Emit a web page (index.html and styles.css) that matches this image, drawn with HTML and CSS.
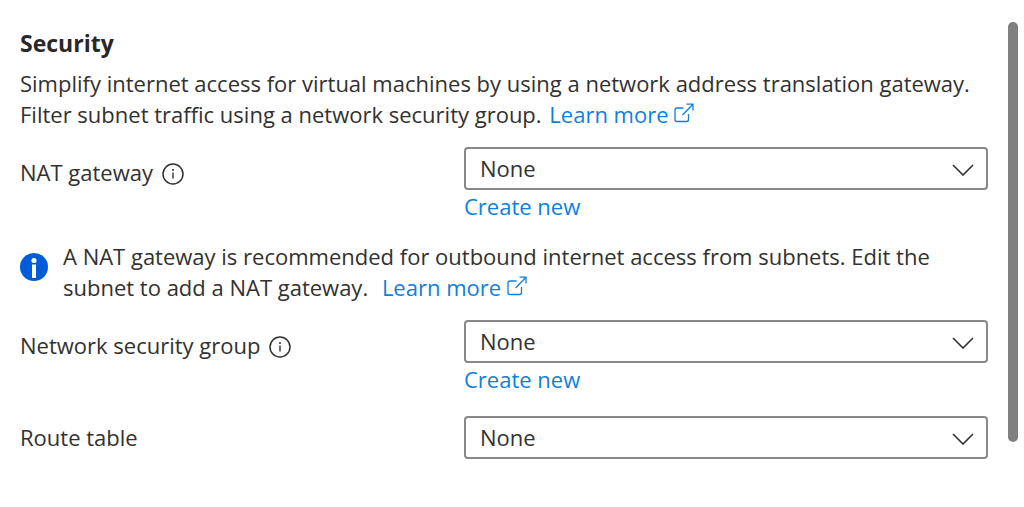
FILE: index.html
```html
<!DOCTYPE html>
<html lang="en">

<head>
  <meta charset="UTF-8" />
  <meta name="viewport" content="width=device-width, initial-scale=1.0" />
  <title>Subnet security</title>
  <link rel="stylesheet" href="styles.css">
</head>

<body>
  <!-- Shared icons -->
  <svg class="sprite" aria-hidden="true">
    <symbol id="icon-info" viewBox="0 0 22 22">
      <circle cx="11" cy="11" r="10" fill="none" stroke="currentColor" stroke-width="1.5" />
      <path d="M11 9.5v6" fill="none" stroke="currentColor" stroke-width="1.4" />
      <circle cx="11" cy="7" r="1" fill="currentColor" />
    </symbol>
    <symbol id="icon-external" viewBox="0 0 20 20">
      <path d="M9.5 5H3a2 2 0 0 0-2 2v9.500a2 2 0 0 0 2 2h9.500a2 2 0 0 0 2-2v-5.500M8.500 12 18.800 1.500M12.500 1.200H19V7.500" fill="none" stroke="currentColor" stroke-width="1.300" />
    </symbol>
    <symbol id="icon-chevron" viewBox="0 0 22 12">
      <path d="M1 1l10 10L21 1" fill="none" stroke="currentColor" stroke-width="1.600" />
    </symbol>
  </svg>

  <div class="panel">
    <main class="content">
      <h1>Security</h1>
      <p class="intro">Simplify internet access for virtual machines by using a network address translation gateway. Filter subnet traffic using a network security group. <a class="learn-more" href="#">Learn more <svg class="external"><use href="#icon-external" /></svg></a></p>

      <div class="field">
        <div class="field-label">
          <label for="nat">NAT gateway</label>
          <svg class="info"><use href="#icon-info" /></svg>
        </div>
        <div class="field-control">
          <div class="dropdown">
            <select id="nat"><option>None</option></select>
            <svg class="chevron"><use href="#icon-chevron" /></svg>
          </div>
          <a class="create" href="#">Create new</a>
        </div>
      </div>

      <div class="notice">
        <svg class="notice-icon" viewBox="0 0 28 28">
          <circle cx="14" cy="14" r="14" fill="#015cda" />
          <circle cx="14" cy="7.500" r="2.600" fill="#fff" />
          <path d="M12 11.500h4V25h-4z" fill="#fff" />
        </svg>
        <p>A NAT gateway is recommended for outbound internet access from subnets. Edit the subnet to add a NAT gateway. <a class="learn-more" href="#">Learn more <svg class="external"><use href="#icon-external" /></svg></a></p>
      </div>

      <div class="field">
        <div class="field-label">
          <label for="nsg">Network security group</label>
          <svg class="info"><use href="#icon-info" /></svg>
        </div>
        <div class="field-control">
          <div class="dropdown">
            <select id="nsg"><option>None</option></select>
            <svg class="chevron"><use href="#icon-chevron" /></svg>
          </div>
          <a class="create" href="#">Create new</a>
        </div>
      </div>

      <div class="field field-plain">
        <div class="field-label">
          <label for="route">Route table</label>
        </div>
        <div class="field-control">
          <div class="dropdown">
            <select id="route"><option>None</option></select>
            <svg class="chevron"><use href="#icon-chevron" /></svg>
          </div>
        </div>
      </div>
    </main>
    <div class="scroll-thumb"></div>
  </div>
</body>

</html>
```
FILE: styles.css
```css
* {
  box-sizing: border-box;
}

body {
  margin: 0;
  background: #fff;
  color: #323130;
  font-family: "Segoe UI", "Open Sans", sans-serif;
  font-size: 22px;
  line-height: 31px;
}

.sprite {
  display: none;
}

.panel {
  display: flex;
  gap: 20px;
  padding: 22px 6px 0 20px;
}

.content {
  flex: 1;
  min-width: 0;
}

h1 {
  margin: 6px 0 10px;
  color: #292827;
  font-size: 23px;
  font-weight: 700;
  line-height: 30px;
}

p {
  margin: 0;
}

a {
  color: #0f7fdb;
  text-decoration: none;
}

.learn-more {
  margin-left: 2px;
  white-space: nowrap;
}

.notice .learn-more {
  margin-left: 8px;
}

.external {
  width: 20px;
  height: 20px;
}

.field {
  display: grid;
  grid-template-columns: 444px 1fr;
  margin-top: 17px;
}

.field-label {
  display: flex;
  align-items: center;
  gap: 9px;
  height: 50px;
}

.info {
  width: 22px;
  height: 22px;
  margin-top: 3px;
}

.field-plain {
  margin-top: 21px;
}

.field-plain .field-label {
  height: 43px;
}

.dropdown {
  display: grid;
  align-items: center;
}

.dropdown select,
.dropdown .chevron {
  grid-area: 1 / 1;
}

.dropdown select {
  width: 100%;
  height: 43px;
  padding: 0 48px 0 14px;
  border: 2px solid #8a8886;
  border-radius: 4px;
  background: #fff;
  color: #323130;
  font: inherit;
  appearance: none;
}

.chevron {
  justify-self: end;
  width: 22px;
  height: 12px;
  margin: 2px 14px 0 0;
  pointer-events: none;
}

.create {
  display: block;
  margin-top: 1px;
}

.notice {
  display: flex;
  align-items: flex-start;
  gap: 15px;
  margin-top: 19px;
}

.notice-icon {
  flex: none;
  width: 28px;
  height: 28px;
  margin-top: 12px;
}

.scroll-thumb {
  width: 10px;
  height: 420px;
  border-radius: 5px;
  background: #808080;
}
```
